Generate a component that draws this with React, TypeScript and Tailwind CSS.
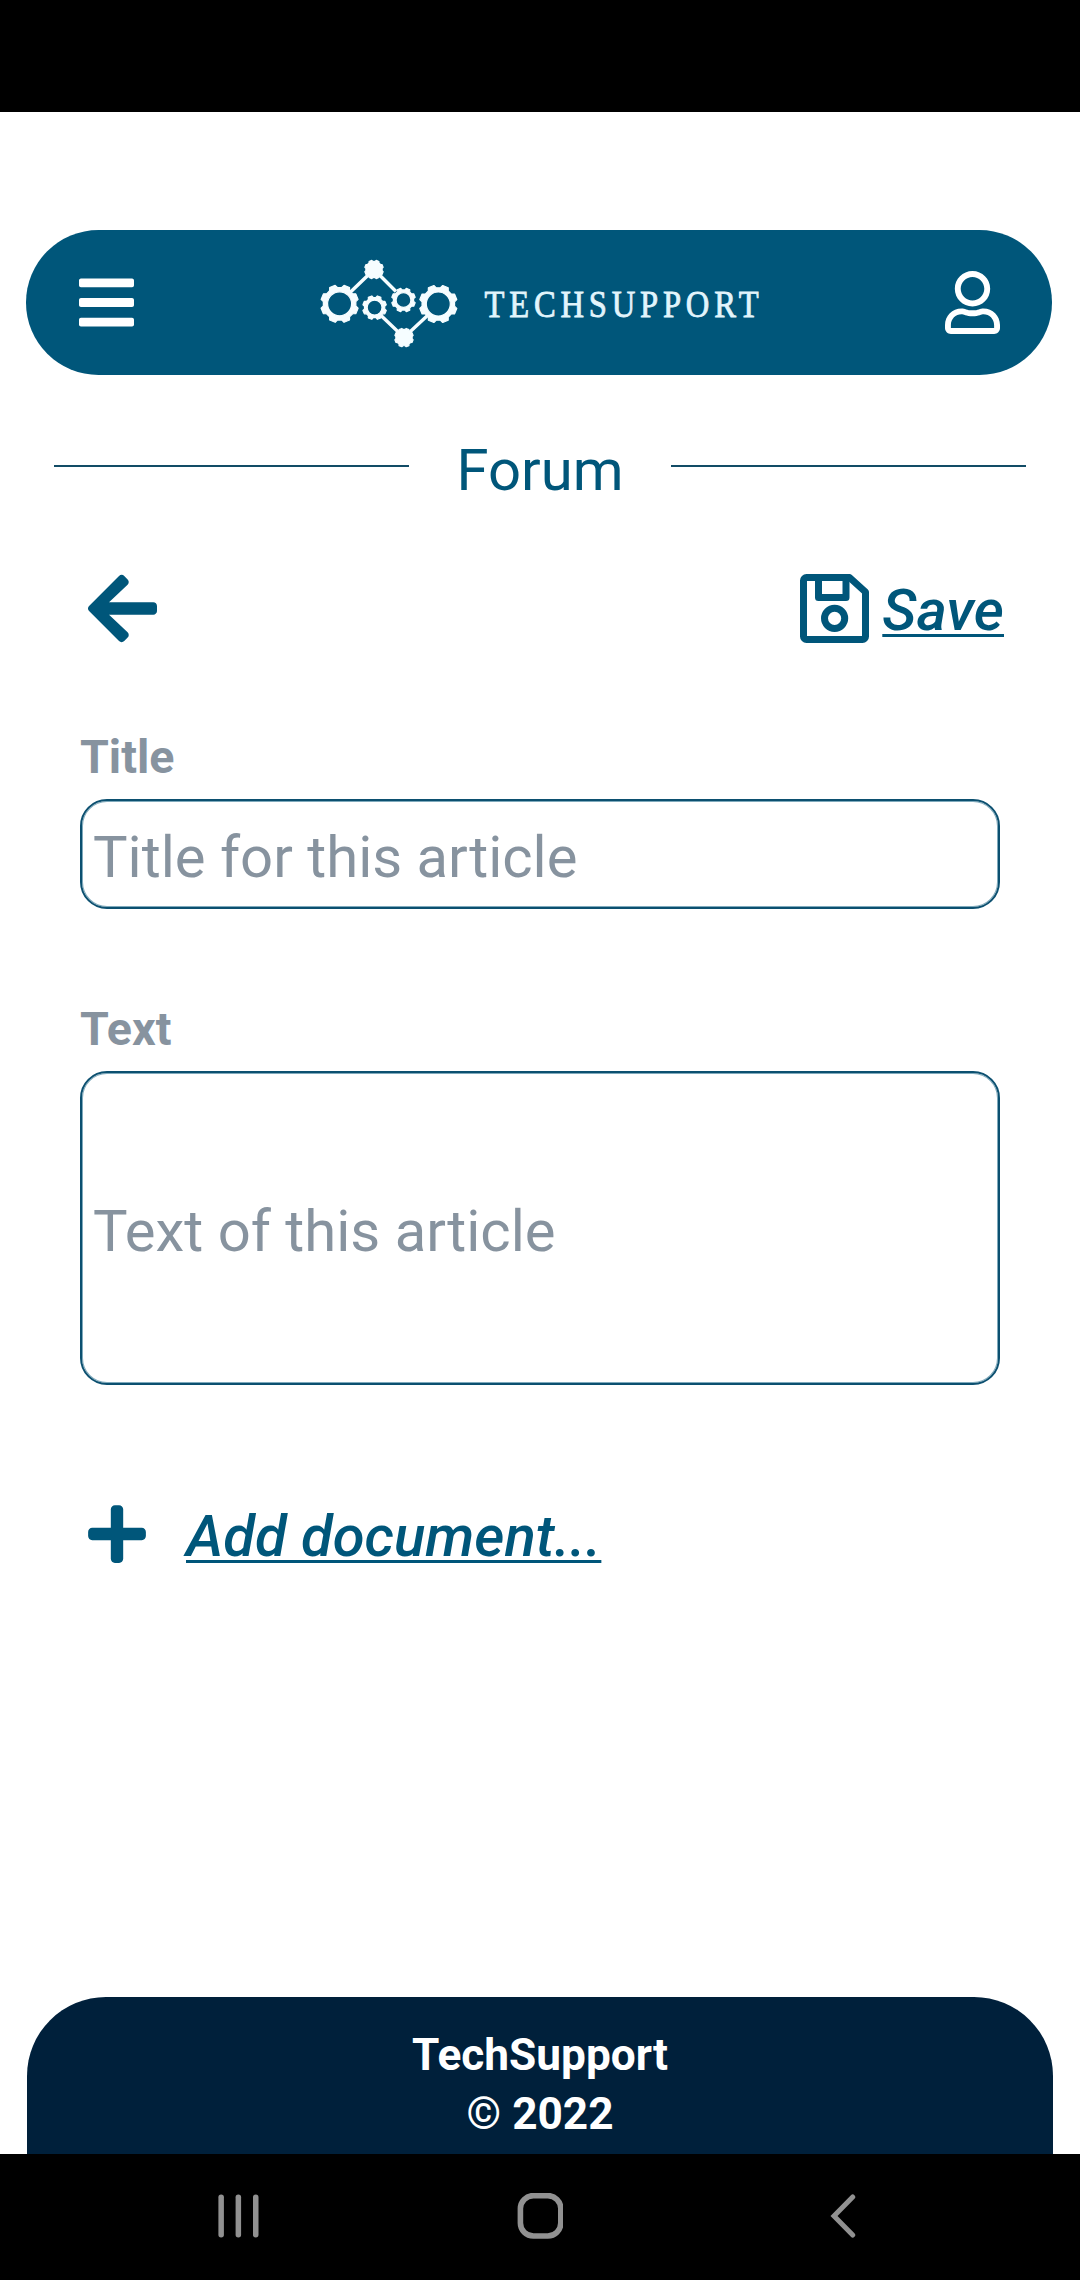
import React from "react";
import { FaArrowLeft, FaBars, FaPlus, FaRegUser } from "react-icons/fa";

// Closed outline of a cog: flat teeth around a circular body.
function cogPath(cx: number, cy: number, outer: number, root: number, teeth: number, hole: number) {
  const step = (Math.PI * 2) / teeth;
  const at = (r: number, a: number) =>
    `${(cx + r * Math.cos(a)).toFixed(2)} ${(cy + r * Math.sin(a)).toFixed(2)}`;
  let d = "";
  for (let i = 0; i < teeth; i++) {
    const a = i * step + step / 2;
    d += `${i === 0 ? "M" : "L"}${at(root, a - step * 0.33)}L${at(outer, a - step * 0.2)}L${at(outer, a + step * 0.2)}L${at(root, a + step * 0.33)}`;
  }
  d += "Z";
  if (hole > 0) {
    d += `M${cx - hole} ${cy}a${hole} ${hole} 0 1 0 ${hole * 2} 0a${hole} ${hole} 0 1 0 ${-hole * 2} 0Z`;
  }
  return d;
}

function Logo() {
  return (
    <svg width="460" height="100" viewBox="310 253 460 100" fill="#f6fdff">
      <path
        d="M350 292.500L374 269.500L396 291.500M381 315.500L404 337.500L427.500 315.500"
        fill="none"
        stroke="#f6fdff"
        strokeWidth="3.4"
      />
      <g fillRule="evenodd" stroke="#f6fdff" strokeWidth="1.2" strokeLinejoin="round">
        <path d={cogPath(339.6, 303.8, 19, 16.4, 8, 12)} />
        <path d={cogPath(438.3, 304, 19, 16.4, 8, 12)} />
        <path d={cogPath(374.6, 307.6, 12, 10.2, 8, 7.4)} />
        <path d={cogPath(403.500, 300, 12, 10.2, 8, 7.4)} />
        <path d={cogPath(374, 269.5, 9.4, 8.200, 8, 0)} />
        <path d={cogPath(404, 337.6, 9.4, 8.200, 8, 0)} />
      </g>
      <text
        transform="translate(484.500 317) scale(0.87 1)"
        fontFamily="'Liberation Serif', serif"
        fontSize="37.5"
        letterSpacing="5.5"
        fill="#e2f5fc"
        stroke="#e2f5fc"
        strokeWidth="0.8"
      >
        TECHSUPPORT
      </text>
    </svg>
  );
}

function SaveIcon() {
  return (
    <svg className="h-[69px] w-[69px]" viewBox="0 0 69 69" fill="none" stroke="#00567a" strokeWidth="7" strokeLinejoin="round">
      <path d="M6.500 3.500H49.500L65.500 18V62.500a3 3 0 0 1-3 3H6.500a3 3 0 0 1-3-3V6.500a3 3 0 0 1 3-3Z" />
      <path d="M18.500 5V23.500H46V5" />
      <circle cx="34.6" cy="44.3" r="10.100" />
    </svg>
  );
}

function Field({ label, placeholder, tall }: { label: string; placeholder: string; tall?: boolean }) {
  return (
    <label className="block">
      <span className="block pt-[1px] text-[46.6px] leading-[55px] font-bold text-[#87939f]">{label}</span>
      <span
        className={`mt-[14px] flex items-center rounded-[27px] border-2 border-[#0c5070] pl-[11px] text-[58px] leading-[68px] text-[#87939f] shadow-[inset_0_0_0_1px_rgba(0,86,122,0.5)] ${tall ? "h-[314px] pt-[6px]" : "h-[110px] pt-[6px]"}`}
      >
        {placeholder}
      </span>
    </label>
  );
}

const linkText =
  "font-medium italic text-[58px] leading-[68px] underline decoration-[3px] underline-offset-[4px] [text-decoration-skip-ink:none]";

export default function App() {
  return (
    <div className="flex h-[2280px] w-[1080px] flex-col bg-white font-['Roboto',sans-serif] text-[#00567a]">
      <div className="h-[112px] bg-black" />

      <header className="mt-[118px] mr-[28px] ml-[26px] flex h-[145px] items-center justify-between rounded-full bg-[#00567a] pr-[52px] pl-[53px] text-white">
        <FaBars className="h-[63px] w-[55px]" />
        <Logo />
        <FaRegUser className="h-[63px] w-[55px]" />
      </header>

      <div className="mt-[60px] flex h-[68px] items-center justify-between px-[54px]">
        <div className="mb-[6px] h-[2px] w-[355px] bg-[#124c66]" />
        <h1 className="pt-[2px] text-[58px] leading-[68px]">Forum</h1>
        <div className="mb-[6px] h-[2px] w-[355px] bg-[#124c66]" />
      </div>

      <div className="mt-[71px] flex h-[69px] items-center justify-between pr-[76px] pl-[88px]">
        <FaArrowLeft className="h-[79px] w-[69px]" />
        <div className="flex items-center gap-[13px]">
          <SaveIcon />
          <span className={`mt-[3px] ${linkText}`}>Save</span>
        </div>
      </div>

      <main className="mt-[86px] flex flex-col gap-[92px] px-[80px]">
        <Field label="Title" placeholder="Title for this article" />
        <Field label="Text" placeholder="Text of this article" tall />
      </main>

      <div className="mt-[115px] flex h-[68px] items-center pl-[88px]">
        <FaPlus className="h-[66px] w-[58px]" />
        <span className={`ml-[40px] pt-[3px] ${linkText}`}>Add document...</span>
      </div>

      <footer className="mt-auto mr-[27px] ml-[27px] h-[157px] rounded-t-[79px] bg-[#00203b] pt-[29px] text-center text-[44.2px] leading-[59px] font-bold text-white">
        <p>TechSupport</p>
        <p>© 2022</p>
      </footer>

      <nav className="flex h-[126px] items-center bg-black pl-[218px]">
        <svg width="41" height="46" viewBox="0 0 41 46" fill="#919191">
          <rect x="0.400" y="0.500" width="5.500" height="43" rx="2.700" />
          <rect x="17.600" y="0.500" width="5.500" height="43" rx="2.700" />
          <rect x="35" y="0.500" width="5.500" height="43" rx="2.700" />
        </svg>
        <svg className="ml-[258px]" width="46" height="48" viewBox="0 0 46 48" fill="none" stroke="#919191" strokeWidth="5.600">
          <rect x="3.400" y="2.600" width="40.400" height="40.400" rx="13" />
        </svg>
        <svg className="ml-[267px]" width="26" height="46" viewBox="0 0 26 46" fill="none" stroke="#919191" strokeWidth="5" strokeLinecap="round">
          <path d="M22.700 3L4 22L22.700 41" />
        </svg>
      </nav>
    </div>
  );
}
